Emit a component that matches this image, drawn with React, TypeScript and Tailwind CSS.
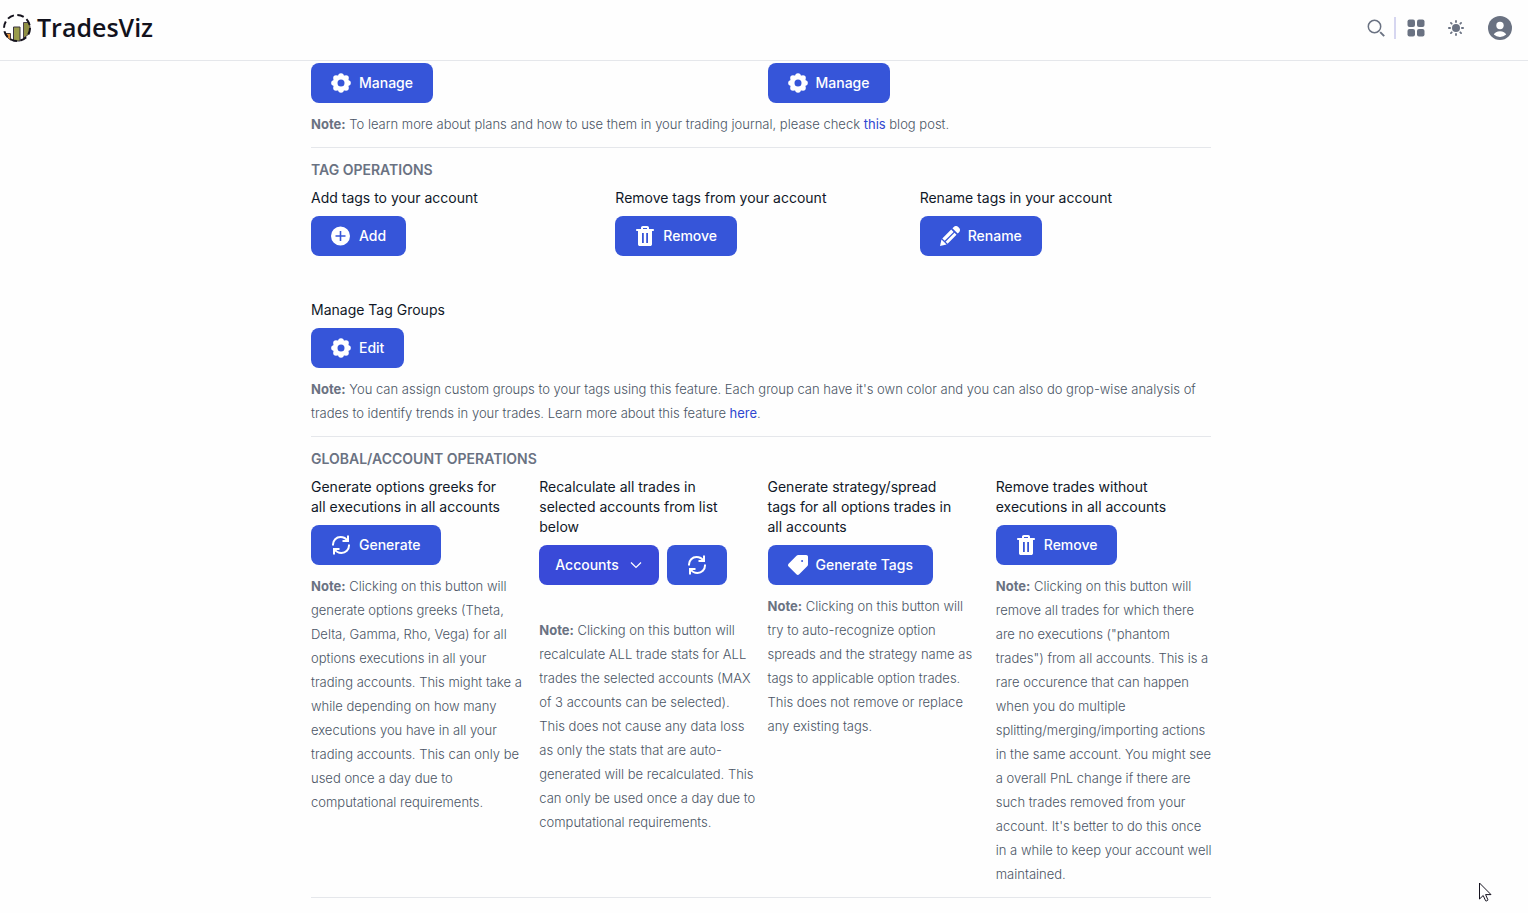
import type { ReactNode } from "react";
import clsx from "clsx";

function GearIcon() {
  return (
    <svg className="size-5 shrink-0" viewBox="0 0 20 20" fill="none" aria-hidden="true">
      <circle cx="10" cy="10" r="5.800" stroke="currentColor" strokeWidth="4.600" />
      <g fill="currentColor">
        <circle cx="10" cy="3" r="2.800" />
        <circle cx="15" cy="5" r="2.800" />
        <circle cx="17" cy="10" r="2.800" />
        <circle cx="15" cy="15" r="2.800" />
        <circle cx="10" cy="17" r="2.800" />
        <circle cx="5" cy="15" r="2.800" />
        <circle cx="3" cy="10" r="2.800" />
        <circle cx="5" cy="5" r="2.800" />
      </g>
    </svg>
  );
}

function AddIcon() {
  return (
    <svg className="size-5 shrink-0" viewBox="0 0 20 20" fill="currentColor" aria-hidden="true">
      <path
        fillRule="evenodd"
        d="M9.500.5a9.500 9.500 0 1 1 0 19 9.500 9.500 0 0 1 0-19ZM8.700 5v4.200H4.500v1.600h4.200V15h1.600v-4.200h4.200V9.200h-4.200V5H8.700Z"
      />
    </svg>
  );
}

function TrashIcon() {
  return (
    <svg className="size-5 shrink-0" viewBox="0 0 20 20" fill="currentColor" aria-hidden="true">
      <path
        fillRule="evenodd"
        d="M6 3V1.800C6 .8 6.800 0 7.800 0h4.400c1 0 1.800.8 1.800 1.800V3h4.800v2H17v13.200c0 1-.8 1.800-1.800 1.800H4.800c-1 0-1.800-.8-1.800-1.800V5H1.200V3H6Zm2-1v1h4V2H8ZM7 7v10h1.800V7H7Zm4.200 0v10H13V7h-1.800Z"
      />
    </svg>
  );
}

function PencilIcon() {
  return (
    <svg className="size-5 shrink-0" viewBox="0 0 20 20" fill="currentColor" aria-hidden="true">
      <path d="M12.400 2.300 13.800.9c1.200-1.200 3-1.200 4.200-.1l1.200 1.200c1.100 1.200 1.100 3-.1 4.200l-1.400 1.400-5.300-5.300Z" />
      <path d="m11.200 3.500 2.400 2.400-8.900 8.900-2.400-2.400 8.900-8.900Z" />
      <path d="m14.500 6.800 2 2-8.900 8.900-2-2 8.900-8.900Z" />
      <path d="M1.500 13.400 6.600 18.500 0 20l1.500-6.600Z" />
    </svg>
  );
}

function SyncIcon() {
  return (
    <svg
      className="size-5 shrink-0"
      viewBox="0 0 20 20"
      fill="none"
      stroke="currentColor"
      strokeWidth="2"
      aria-hidden="true"
    >
      <path d="M2 10.500V9.500C2 5.300 5.300 2 9.500 2c3 0 5.600 1.500 7.200 4" />
      <path d="M18 9.500v1c0 4.200-3.300 7.500-7.500 7.500-3 0-5.600-1.500-7.200-4" />
      <path d="M17 .5V6h-5.500" />
      <path d="M3 19.500V14h5.500" />
    </svg>
  );
}

function TagIcon() {
  return (
    <svg className="size-5 shrink-0" viewBox="0 0 20 20" fill="currentColor" aria-hidden="true">
      <path
        fillRule="evenodd"
        d="M10.300 0h7.900c1 0 1.800.8 1.800 1.800v7.700c0 .7-.3 1.300-.8 1.800l-8 8c-.8.8-2 .8-2.800 0L.6 11.600c-.8-.8-.8-2 0-2.800L8.500.8c.5-.5 1.100-.8 1.800-.8Zm3.800 5a1 1 0 1 0 0 2 1 1 0 0 0 0-2Z"
      />
    </svg>
  );
}

function LogoMark() {
  return (
    <svg className="size-7" viewBox="0 0 28 28" fill="none" aria-hidden="true">
      <path d="M2.500 19.500H7.500V26L4.500 23.500Z" fill="#e08f3a" stroke="#4a3a38" />
      <path d="M10.500 13h6.500v14h-6.500Z" fill="#9a9c4a" stroke="#3a3440" />
      <path d="M20.500 8.500h5.700l1 6-1.500 5.500-5.200 4.500Z" fill="#8f8f43" stroke="#4a4048" />
      <circle cx="14" cy="14" r="13" stroke="#14121c" strokeWidth="2" strokeDasharray="6.700 3.500" />
    </svg>
  );
}

type ActionButtonProps = { icon: ReactNode; children?: ReactNode; label?: string };

function ActionButton({ icon, children, label }: ActionButtonProps) {
  return (
    <button
      type="button"
      aria-label={label}
      className="inline-flex h-10 items-center gap-2 rounded-lg bg-[#3655d9] px-5 text-sm font-medium text-white hover:bg-[#2d49c4]"
    >
      {icon}
      {children}
    </button>
  );
}

function Operation({ title, children }: { title: string; children: ReactNode }) {
  return (
    <div>
      <h3 className="mb-2 pr-4 text-sm leading-5 text-gray-900">{title}</h3>
      {children}
    </div>
  );
}

function Note({ children, className = "mt-[9px]" }: { children: ReactNode; className?: string }) {
  return (
    <p className={clsx("text-[13px] leading-6 font-light text-gray-600", className)}>
      <strong className="font-bold text-gray-500">Note:</strong> {children}
    </p>
  );
}

function SectionTitle({ children }: { children: ReactNode }) {
  return <h2 className="mb-2 text-sm leading-5 font-semibold text-gray-500 uppercase">{children}</h2>;
}

function Header() {
  return (
    <header className="flex h-[61px] items-center justify-between border-b border-gray-200 pr-4 pb-1 pl-[3px]">
      <a href="#" className="flex items-center gap-1.5">
        <LogoMark />
        <span className="pb-0.5 font-['Open_Sans',sans-serif] text-[25px] leading-8 font-semibold text-[#12121c]">TradesViz</span>
      </a>
      <div className="flex items-center text-gray-500">
        <button type="button" aria-label="Search" className="mr-2 flex size-5 items-center justify-center">
          <svg className="size-5" viewBox="0 0 20 20" fill="none" stroke="currentColor">
            <circle cx="8.500" cy="8.500" r="6.200" strokeWidth="1.500" />
            <path d="m14.200 14.200 4 4" strokeWidth="1.900" />
          </svg>
        </button>
        <span className="mr-2 h-[22px] w-0.5 bg-[#d6d6f0]" />
        <button type="button" aria-label="Apps" className="mr-4 flex size-6 items-center justify-center">
          <svg className="size-[18px]" viewBox="0 0 18 18" fill="currentColor">
            <rect x="0.500" y="0.500" width="7.500" height="7.500" rx="2" />
            <rect x="10" y="0.500" width="7.500" height="7.500" rx="2" />
            <rect x="0.500" y="10" width="7.500" height="7.500" rx="2" />
            <rect x="10" y="10" width="7.500" height="7.500" rx="2" />
          </svg>
        </button>
        <button type="button" aria-label="Theme" className="mr-5 flex size-6 items-center justify-center">
          <svg className="size-4" viewBox="0 0 16 16" fill="currentColor" stroke="currentColor">
            <circle cx="8" cy="8" r="4" stroke="none" />
            <path
              d="M8 .9v1.200M8 13.900v1.200M.9 8h1.200M13.900 8h1.200M2.900 2.900l.8.8M12.300 12.300l.8.8M2.900 13.100l.8-.8M12.300 3.700l.8-.8"
              strokeWidth="1.800"
              strokeLinecap="round"
            />
          </svg>
        </button>
        <button type="button" aria-label="Profile" className="size-6">
          <svg className="size-6" viewBox="0 0 24 24">
            <circle cx="12" cy="12" r="12" fill="currentColor" />
            <circle cx="12" cy="9.500" r="3.700" fill="#fff" />
            <path d="M5.800 18.600c.8-2 3.200-3.300 6.200-3.300s5.400 1.300 6.200 3.300A9 9 0 0 1 12 21a9 9 0 0 1-6.200-2.400Z" fill="#fff" />
          </svg>
        </button>
      </div>
    </header>
  );
}

export default function App() {
  return (
    <div className="min-h-screen bg-[#fefefe] font-['Inter',sans-serif]">
      <Header />
      <main className="pt-0.5 pr-1.5">
        <div className="mx-auto max-w-[900px]">
          <section className="border-b border-gray-200 pb-[11px]">
            <div className="grid grid-cols-2 gap-[13px]">
              <div>
                <ActionButton icon={<GearIcon />}>Manage</ActionButton>
              </div>
              <div>
                <ActionButton icon={<GearIcon />}>Manage</ActionButton>
              </div>
            </div>
            <Note>
              To learn more about plans and how to use them in your trading journal, please check{" "}
              <a href="#" className="font-normal text-[#2f47d0]">this</a> blog post.
            </Note>
          </section>

          <section className="border-b border-gray-200 pt-3 pb-[11px]">
            <SectionTitle>Tag operations</SectionTitle>
            <div className="grid grid-cols-3 gap-x-[13px] gap-y-11">
              <Operation title="Add tags to your account">
                <ActionButton icon={<AddIcon />}>Add</ActionButton>
              </Operation>
              <Operation title="Remove tags from your account">
                <ActionButton icon={<TrashIcon />}>Remove</ActionButton>
              </Operation>
              <Operation title="Rename tags in your account">
                <ActionButton icon={<PencilIcon />}>Rename</ActionButton>
              </Operation>
              <Operation title="Manage Tag Groups">
                <ActionButton icon={<GearIcon />}>Edit</ActionButton>
              </Operation>
            </div>
            <Note>
              You can assign custom groups to your tags using this feature. Each group can have it's own color and you
              can also do grop-wise analysis of trades to identify trends in your trades. Learn more about this feature{" "}
              <a href="#" className="font-normal text-[#2f47d0]">here</a>.
            </Note>
          </section>

          <section className="border-b border-gray-200 pt-3 pb-[11px]">
            <SectionTitle>Global/account operations</SectionTitle>
            <div className="grid grid-cols-4 gap-[13px]">
              <Operation title="Generate options greeks for all executions in all accounts">
                <ActionButton icon={<SyncIcon />}>Generate</ActionButton>
                <Note>
                  Clicking on this button will generate options greeks (Theta, Delta, Gamma, Rho, Vega) for all options
                  executions in all your trading accounts. This might take a while depending on how many executions you
                  have in all your trading accounts. This can only be used once a day due to computational requirements.
                </Note>
              </Operation>
              <Operation title="Recalculate all trades in selected accounts from list below">
                <div className="flex gap-2">
                  <button
                    type="button"
                    aria-haspopup="listbox"
                    className="inline-flex h-10 items-center gap-2.5 rounded-lg bg-[#394ad8] px-4 text-sm font-medium text-white"
                  >
                    Accounts
                    <svg className="size-3.5" viewBox="0 0 14 14" fill="none" stroke="currentColor" strokeWidth="1.200" aria-hidden="true">
                      <path d="m2 4.500 5 5 5-5" />
                    </svg>
                  </button>
                  <ActionButton icon={<SyncIcon />} label="Recalculate" />
                </div>
                <Note className="mt-[33px] -mr-1">
                  Clicking on this button will recalculate ALL trade stats for ALL trades the selected accounts (MAX of
                  3 accounts can be selected). This does not cause any data loss as only the stats that are
                  auto-generated will be recalculated. This can only be used once a day due to computational
                  requirements.
                </Note>
              </Operation>
              <Operation title="Generate strategy/spread tags for all options trades in all accounts">
                <ActionButton icon={<TagIcon />}>Generate Tags</ActionButton>
                <Note className="mt-[9px] pr-1.5">
                  Clicking on this button will try to auto-recognize option spreads and the strategy name as tags to
                  applicable option trades. This does not remove or replace any existing tags.
                </Note>
              </Operation>
              <Operation title="Remove trades without executions in all accounts">
                <ActionButton icon={<TrashIcon />}>Remove</ActionButton>
                <Note className="mt-[9px] -mr-1">
                  Clicking on this button will remove all trades for which there are no executions ("phantom trades")
                  from all accounts. This is a rare occurence that can happen when you do multiple
                  splitting/merging/importing actions in the same account. You might see a overall PnL change if there
                  are such trades removed from your account. It's better to do this once in a while to keep your account
                  well maintained.
                </Note>
              </Operation>
            </div>
          </section>
        </div>
      </main>

      {/* mouse pointer */}
      <svg className="pointer-events-none fixed right-9 bottom-[11px] h-5 w-[13px]" viewBox="0 0 13 20" aria-hidden="true">
        <path
          d="M.5 1v16l3.700-3.500 2.400 5.300c.3.600 2.600-.3 2.300-1L6.600 12.600H12L.5 1Z"
          fill="#fff"
          stroke="#15131f"
        />
      </svg>
    </div>
  );
}
